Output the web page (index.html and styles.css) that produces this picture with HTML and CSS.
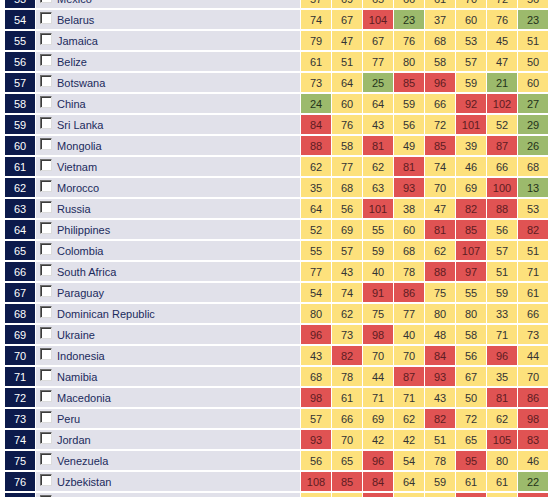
FILE: index.html
```html
<!DOCTYPE html>
<html lang="en">

<head>
    <meta charset="UTF-8">
    <title>Country Ranking</title>
    <link rel="stylesheet" href="styles.css">
</head>

<body>

    <table id="rank-table">
        <tbody></tbody>
    </table>

    <script>
        let tableBody = document.querySelector("#rank-table tbody");

        // rank, country, scores
        let rows = [
            [53, "Mexico", [57, 69, 65, 66, 61, 70, 72, 56]],
            [54, "Belarus", [74, 67, 104, 23, 37, 60, 76, 23]],
            [55, "Jamaica", [79, 47, 67, 76, 68, 53, 45, 51]],
            [56, "Belize", [61, 51, 77, 80, 58, 57, 47, 50]],
            [57, "Botswana", [73, 64, 25, 85, 96, 59, 21, 60]],
            [58, "China", [24, 60, 64, 59, 66, 92, 102, 27]],
            [59, "Sri Lanka", [84, 76, 43, 56, 72, 101, 52, 29]],
            [60, "Mongolia", [88, 58, 81, 49, 85, 39, 87, 26]],
            [61, "Vietnam", [62, 77, 62, 81, 74, 46, 66, 68]],
            [62, "Morocco", [35, 68, 63, 93, 70, 69, 100, 13]],
            [63, "Russia", [64, 56, 101, 38, 47, 82, 88, 53]],
            [64, "Philippines", [52, 69, 55, 60, 81, 85, 56, 82]],
            [65, "Colombia", [55, 57, 59, 68, 62, 107, 57, 51]],
            [66, "South Africa", [77, 43, 40, 78, 88, 97, 51, 71]],
            [67, "Paraguay", [54, 74, 91, 86, 75, 55, 59, 61]],
            [68, "Dominican Republic", [80, 62, 75, 77, 80, 80, 33, 66]],
            [69, "Ukraine", [96, 73, 98, 40, 48, 58, 71, 73]],
            [70, "Indonesia", [43, 82, 70, 70, 84, 56, 96, 44]],
            [71, "Namibia", [68, 78, 44, 87, 93, 67, 35, 70]],
            [72, "Macedonia", [98, 61, 71, 71, 43, 50, 81, 86]],
            [73, "Peru", [57, 66, 69, 62, 82, 72, 62, 98]],
            [74, "Jordan", [93, 70, 42, 42, 51, 65, 105, 83]],
            [75, "Venezuela", [56, 65, 96, 54, 78, 95, 80, 46]],
            [76, "Uzbekistan", [108, 85, 84, 64, 59, 61, 61, 22]],
            [77, "Ecuador", [70, 66, 92, 58, 64, 90, 75, 89]]
        ];

        rows.forEach(row => {
            let tableRow = document.createElement('tr');
            let cells = `
                <td class="rank">${row[0]}</td>
                <td class="country"><div class="country-inner"><span class="check"></span>${row[1]}</div></td>`;

            row[2].forEach(score => {
                let level = "mid";
                if (score > 80) level = "high";
                if (score < 30) level = "low";
                cells += `<td class="score ${level}">${score}</td>`;
            });

            tableRow.innerHTML = cells;
            tableBody.appendChild(tableRow);
        });
    </script>
</body>

</html>
```

FILE: styles.css
```css
body {
    margin: 0;
    background-color: #fff;
    font-family: "Liberation Sans", Arial, sans-serif;
    overflow: hidden;
}

/*--------------Table-------------*/
#rank-table {
    border-collapse: separate;
    border-spacing: 1px 2px;
    margin-top: -13px;
    margin-left: 4px;
}

#rank-table td {
    height: 19px;
    padding: 0;
    font-size: 11px;
}

/* Rank number */
.rank {
    width: 30px;
    background-color: #0c1a4b;
    color: #fff;
    text-align: center;
}

/* Country name */
.country {
    width: 264px;
    background-color: #e1e1ea;
    color: #1b2a5c;
}

.country-inner {
    display: flex;
    align-items: center;
    gap: 5px;
    padding-left: 4px;
    padding-top: 1px;
}

.check {
    display: block;
    width: 10px;
    height: 10px;
    margin-top: -4px;
    background-color: #fff;
    border: 1px solid;
    border-color: #6e6e6e #dcdcdc #dcdcdc #6e6e6e;
    box-shadow: inset 1px 1px 0 #3c3c3c;
}

/* Score cells */
.score {
    width: 30px;
    text-align: center;
    color: #333;
}

.mid {
    background-color: #fde17c;
}

.high {
    background-color: #e05353;
    color: #5e1c22;
}

.low {
    background-color: #9cba6c;
    color: #24321a;
}
```
